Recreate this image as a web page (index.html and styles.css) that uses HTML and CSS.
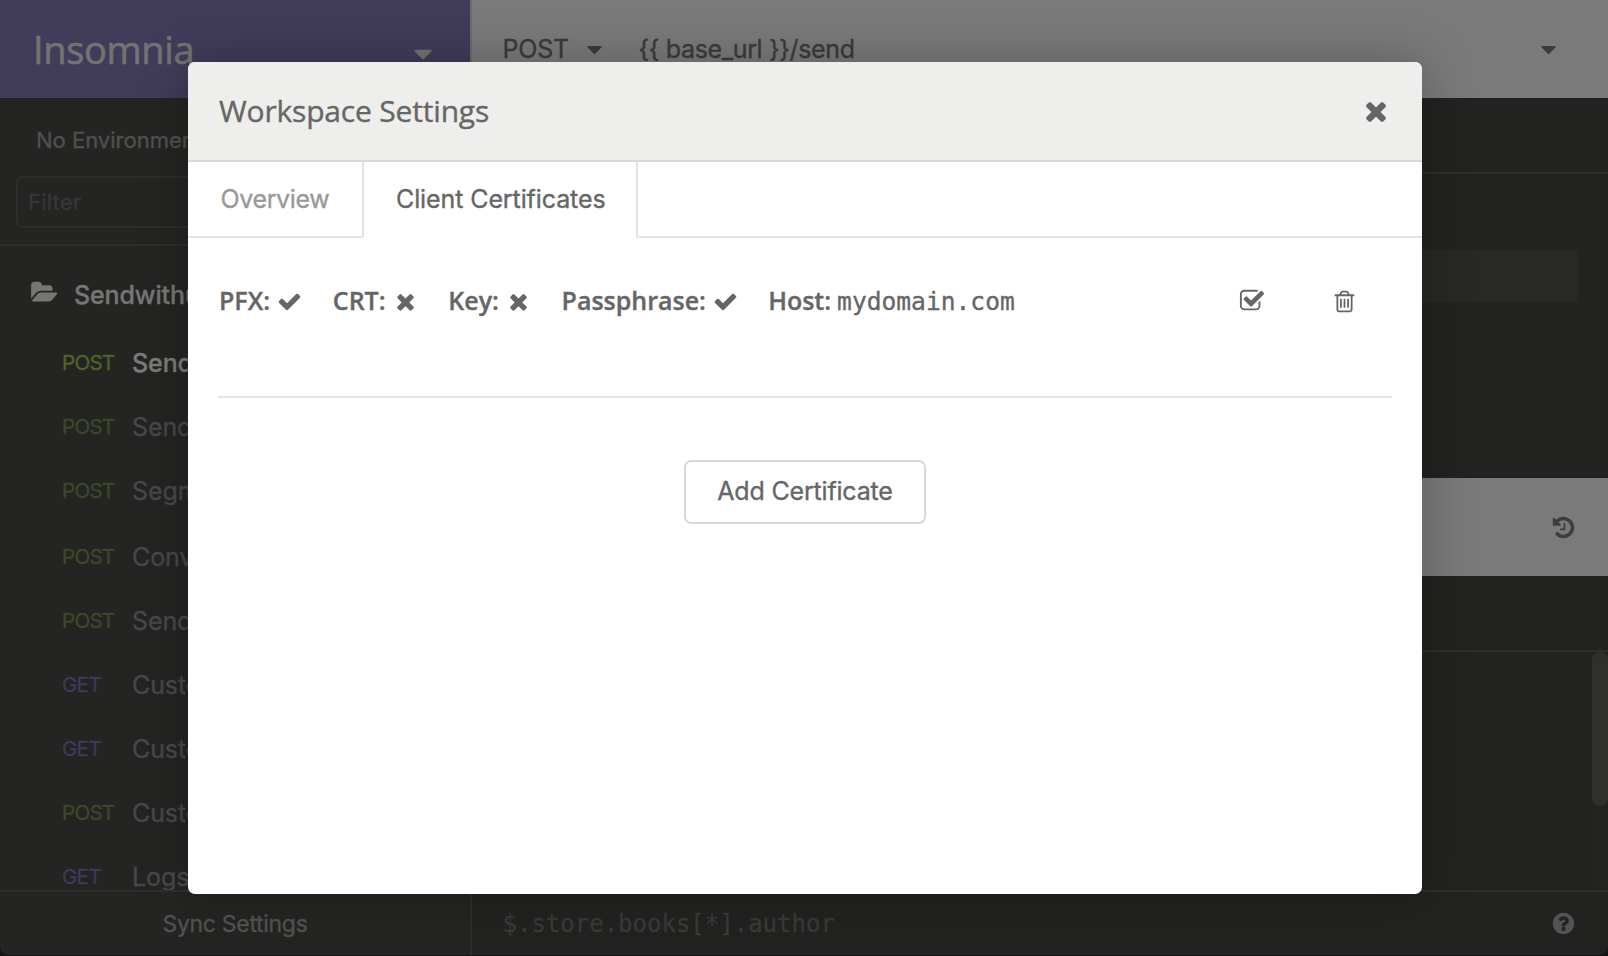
FILE: index.html
```html
<!DOCTYPE html>
<html lang="en">
<head>
<meta charset="utf-8">
<title>Insomnia</title>
<link rel="stylesheet" href="styles.css">
</head>
<body>
<svg class="defs" aria-hidden="true">
  <symbol id="times" viewBox="0 0 1792 1792"><path d="M1490 1322q0 40-28 68l-136 136q-28 28-68 28t-68-28l-294-294-294 294q-28 28-68 28t-68-28l-136-136q-28-28-28-68t28-68l294-294-294-294q-28-28-28-68t28-68l136-136q28-28 68-28t68 28l294 294 294-294q28-28 68-28t68 28l136 136q28 28 28 68t-28 68l-294 294 294 294q28 28 28 68z"/></symbol>
  <symbol id="check" viewBox="0 0 1792 1792"><path d="M1671 566q0 40-28 68l-724 724-136 136q-28 28-68 28t-68-28l-136-136-362-362q-28-28-28-68t28-68l136-136q28-28 68-28t68 28l294 295 656-657q28-28 68-28t68 28l136 136q28 28 28 68z"/></symbol>
  <symbol id="check-square" viewBox="0 0 1792 1792"><path d="M1472 930v318q0 119-84.500 203.500t-203.500 84.500h-832q-119 0-203.500-84.500t-84.500-203.500v-832q0-119 84.500-203.500t203.500-84.500h832q63 0 117 25 15 7 18 23 3 17-9 29l-49 49q-10 10-23 10-3 0-9-2-23-6-45-6h-832q-66 0-113 47t-47 113v832q0 66 47 113t113 47h832q66 0 113-47t47-113v-254q0-13 9-22l64-64q10-10 23-10 6 0 12 3 20 8 20 29zm231-489l-814 814q-24 24-57 24t-57-24l-430-430q-24-24-24-57t24-57l110-110q24-24 57-24t57 24l263 263 647-647q24-24 57-24t57 24l110 110q24 24 24 57t-24 57z"/></symbol>
  <symbol id="trash" viewBox="0 0 1792 1792"><path d="M704 736v576q0 14-9 23t-23 9h-64q-14 0-23-9t-9-23v-576q0-14 9-23t23-9h64q14 0 23 9t9 23zm256 0v576q0 14-9 23t-23 9h-64q-14 0-23-9t-9-23v-576q0-14 9-23t23-9h64q14 0 23 9t9 23zm256 0v576q0 14-9 23t-23 9h-64q-14 0-23-9t-9-23v-576q0-14 9-23t23-9h64q14 0 23 9t9 23zm128 724v-948h-896v948q0 22 7 40.500t14.500 27 10.500 8.500h832q3 0 10.500-8.500t14.500-27 7-40.500zm-672-1076h448l-48-117q-7-9-17-11h-317q-10 2-17 11zm928 32v64q0 14-9 23t-23 9h-96v948q0 83-47 143.500t-113 60.500h-832q-66 0-113-58.500t-47-141.500v-952h-96q-14 0-23-9t-9-23v-64q0-14 9-23t23-9h309l70-167q15-37 54-63t79-26h320q40 0 79 26t54 63l70 167h309q14 0 23 9t9 23z"/></symbol>
  <symbol id="caret" viewBox="0 0 1792 1792"><path d="M1408 704q0 26-19 45l-448 448q-19 19-45 19t-45-19l-448-448q-19-19-19-45t19-45 45-19h896q26 0 45 19t19 45z"/></symbol>
  <symbol id="folder" viewBox="0 0 1920 1792"><path d="M1879 952q0 31-31 66l-336 396q-43 51-120.500 86.500t-143.500 35.500h-1088q-34 0-60.500-13t-26.500-43q0-31 31-66l336-396q43-51 120.500-86.500t143.500-35.500h1088q34 0 60.500 13t26.500 43zm-343-344v160h-832q-94 0-197 47.500t-164 119.500l-337 396-5 6q0-4-.5-12.500t-.5-12.500v-960q0-92 66-158t158-66h320q92 0 158 66t66 158v32h544q92 0 158 66t66 158z"/></symbol>
  <symbol id="history" viewBox="0 0 1792 1792"><path d="M1664 896q0 156-61 298t-164 245-245 164-298 61q-172 0-327-72.500t-264-204.500q-7-10-6.500-22.500t8.500-20.500l137-138q10-9 25-9 16 2 23 12 73 95 179 147t225 52q104 0 198.500-40.500t163.500-109.500 109.500-163.500 40.500-198.500-40.500-198.500-109.500-163.500-163.500-109.500-198.500-40.500q-98 0-188 35.500t-160 101.500l137 138q31 30 14 69-17 40-59 40h-448q-26 0-45-19t-19-45v-448q0-42 40-59 39-17 69 14l130 129q107-101 244.500-156.500t284.500-55.500q156 0 298 61t245 164 164 245 61 298zm-640-288v448q0 14-9 23t-23 9h-320q-14 0-23-9t-9-23v-64q0-14 9-23t23-9h224v-352q0-14 9-23t23-9h64q14 0 23 9t9 23z"/></symbol>
  <symbol id="question" viewBox="0 0 1792 1792"><path d="M1024 1376v-192q0-14-9-23t-23-9h-192q-14 0-23 9t-9 23v192q0 14 9 23t23 9h192q14 0 23-9t9-23zm256-672q0-88-55.500-163t-138.500-116-170-41q-243 0-371 213-15 24 8 42l132 100q7 6 19 6 16 0 25-12 53-68 86-92 34-24 86-24 48 0 85.500 26t37.500 59q0 38-20 61t-68 45q-63 28-115.500 86.500t-52.500 125.500v36q0 14 9 23t23 9h192q14 0 23-9t9-23q0-19 21.500-49.500t54.500-49.500q32-18 49-28.500t46-35 44.500-48 28-60.500 12.500-81zm384 192q0 209-103 385.500t-279.500 279.500-385.500 103-385.500-103-279.500-279.500-103-385.500 103-385.500 279.500-279.500 385.500-103 385.500 103 279.500 279.500 103 385.500z"/></symbol>
</svg>

<div class="app">
  <aside class="sidebar">
    <header class="brand"><h1>Insomnia</h1><svg class="icon brand-caret"><use href="#caret"/></svg></header>
    <div class="environment">No Environment</div>
    <div class="filter"><div class="filter-box">Filter</div></div>
    <nav class="requests">
      <div class="folder"><svg class="folder-icon"><use href="#folder"/></svg><span>Sendwithus</span></div>
      <div class="request active"><b class="post">POST</b><span>Send</span></div>
      <div class="request"><b class="post">POST</b><span>Send</span></div>
      <div class="request spaced"><b class="post">POST</b><span>Segment</span></div>
      <div class="request"><b class="post">POST</b><span>Conv</span></div>
      <div class="request"><b class="post">POST</b><span>Send</span></div>
      <div class="request"><b class="get">GET</b><span>Custo</span></div>
      <div class="request"><b class="get">GET</b><span>Custo</span></div>
      <div class="request"><b class="post">POST</b><span>Custo</span></div>
      <div class="request"><b class="get">GET</b><span>Logs</span></div>
    </nav>
    <footer class="sync">Sync Settings</footer>
  </aside>

  <main class="pane">
    <div class="urlbar">
      <span class="method">POST</span><svg class="icon"><use href="#caret"/></svg>
      <span class="url">{{ base_url }}/send</span>
      <svg class="icon send-caret"><use href="#caret"/></svg>
    </div>
    <div class="pane-tabs"></div>
    <div class="body-area"><div class="field"></div></div>
    <div class="response-bar"><svg class="icon"><use href="#history"/></svg></div>
    <div class="response-tabs"></div>
    <div class="response-body"><div class="track"><div class="thumb"></div></div></div>
    <footer class="query"><span>$.store.books[*].author</span><svg class="icon"><use href="#question"/></svg></footer>
  </main>
</div>

<section class="modal" role="dialog">
  <header class="modal-header"><h2>Workspace Settings</h2><svg class="icon close"><use href="#times"/></svg></header>
  <div class="tabs">
    <div class="tab overview">Overview</div>
    <div class="tab selected">Client Certificates</div>
    <div class="tab-rest"></div>
  </div>
  <div class="modal-body">
    <div class="cert">
      <div class="prop"><strong>PFX:</strong><svg class="icon"><use href="#check"/></svg></div>
      <div class="prop"><strong>CRT:</strong><svg class="icon"><use href="#times"/></svg></div>
      <div class="prop"><strong>Key:</strong><svg class="icon"><use href="#times"/></svg></div>
      <div class="prop"><strong>Passphrase:</strong><svg class="icon"><use href="#check"/></svg></div>
      <div class="prop host"><strong>Host:</strong><code>mydomain.com</code></div>
      <div class="actions"><svg class="icon toggle"><use href="#check-square"/></svg><svg class="icon"><use href="#trash"/></svg></div>
    </div>
    <div class="rule"></div>
    <button class="add">Add Certificate</button>
  </div>
</section>
</body>
</html>
```
FILE: styles.css
```css
* { box-sizing: border-box; }

body {
  margin: 0;
  width: 1608px;
  height: 956px;
  overflow: hidden;
  background: #151414;
  font-family: Inter, "Liberation Sans", sans-serif;
  font-size: 25px;
  white-space: nowrap;
  -webkit-text-stroke: 0.35px currentColor;
}

h1, h2 { margin: 0; font-weight: 400; font-family: "Open Sans", sans-serif; }
.defs { display: none; }
.icon { width: 25px; height: 25px; flex: none; fill: currentColor; }

.app {
  display: grid;
  grid-template-columns: 470px 1138px;
  height: 955px;
  border-radius: 0 0 9px 9px;
  overflow: hidden;
}

/* Sidebar */
.sidebar {
  display: flex;
  flex-direction: column;
  min-height: 0;
  overflow: hidden;
  background: #242422;
  color: #484848;
}
.brand {
  display: flex;
  align-items: center;
  justify-content: space-between;
  height: 98px;
  padding: 0 32px 0 33px;
  background: #403c5a;
  color: #747371;
}
.brand h1 { font-size: 38px; letter-spacing: -0.35px; line-height: 98px; -webkit-text-stroke-width: 0.6px; }
.brand-caret { width: 30px; height: 30px; margin-top: 9px; }
.environment {
  height: 78px;
  padding: 5px 0 0 36px;
  line-height: 74px;
  font-size: 22px;
  color: #50504f;
}
.filter { height: 70px; padding: 0 16px; border-bottom: 2px solid #2d2d2b; }
.filter-box {
  height: 52px;
  padding-left: 10px;
  border: 2px solid #2d2d2c;
  border-radius: 7px;
  font-size: 22px;
  line-height: 48px;
  color: #373737;
  letter-spacing: 0.2px;
}
.requests { flex: 1; min-height: 0; padding-top: 17px; }
.folder {
  display: flex;
  align-items: center;
  height: 64px;
  margin-bottom: 4px;
  padding-left: 31px;
  color: #767675;
  font-weight: 500;
  letter-spacing: -0.13px;
}
.folder-icon { width: 27px; height: 25px; margin: -6px 16px 0 0; fill: currentColor; }
.request { display: flex; align-items: center; height: 64px; padding-left: 62px; }
.request b { width: 70px; padding-bottom: 1px; font-weight: 400; font-size: 20.6px; letter-spacing: -0.75px; }
.request span { letter-spacing: -0.1px; }
.post { color: #3c4829; }
.get { color: #3d3a58; }
.active span { color: #7b7b7a; font-weight: 500; }
.active .post { color: #4d6429; }
.spaced { margin-bottom: 2px; }
.sync {
  height: 65px;
  border-top: 2px solid #2d2d2c;
  text-align: center;
  font-size: 23px;
  letter-spacing: -0.3px;
  line-height: 65px;
  color: #525251;
}

/* Request and response panes */
.pane {
  display: flex;
  flex-direction: column;
  min-height: 0;
  background: #222220;
  border-left: 2px solid #2d2d2c;
}
.urlbar {
  display: flex;
  align-items: center;
  height: 98px;
  margin-left: -2px;
  padding: 0 47px 0 30.500px;
  border-left: 2px solid #6c6c6b;
  background: #7a7a7a;
  color: #3b3b3a;
}
.method { width: 79px; letter-spacing: -0.2px; }
.url { margin-left: 32px; letter-spacing: -0.36px; }
.send-caret { margin-left: auto; }
.pane-tabs { height: 76px; border-bottom: 2px solid #2d2d2c; }
.body-area { height: 304px; padding: 76px 30px 0; }
.field { height: 52px; background: #282826; }
.response-bar {
  display: flex;
  align-items: center;
  justify-content: flex-end;
  height: 98px;
  padding-right: 32px;
  background: #7a7a7a;
  color: #3e3e3d;
}
.response-tabs { height: 76px; border-bottom: 2px solid #2d2d2c; }
.response-body { flex: 1; display: flex; justify-content: flex-end; }
.track { width: 16px; background: #232321; }
.thumb { height: 154px; border-radius: 8px; background: #2f2f2e; }
.query {
  display: flex;
  align-items: center;
  justify-content: space-between;
  height: 65px;
  padding: 0 32px 0 30.500px;
  border-top: 2px solid #2d2d2c;
  font-family: "DejaVu Sans Mono", monospace;
  font-size: 24px;
  color: #393938;
}
.query .icon { color: #535353; }

/* Workspace settings dialog */
.modal {
  position: absolute;
  left: 188px;
  top: 62px;
  width: 1234px;
  height: 832px;
  overflow: hidden;
  border-radius: 7px;
  background: #fff;
  color: #666;
  box-shadow: 0 0 50px rgba(0, 0, 0, 0.25);
}
.modal-header {
  display: flex;
  align-items: center;
  justify-content: space-between;
  height: 100px;
  padding: 0 31px;
  border-bottom: 2px solid #d9d9d8;
  background: #eeeeec;
}
.modal-header h2 { font-size: 30px; letter-spacing: -0.18px; line-height: 98px; }
.close { width: 30px; height: 30px; }
.tabs { display: flex; height: 76px; line-height: 74px; }
.tab { border-right: 2px solid #e2e2e2; }
.overview {
  width: 176px;
  padding-left: 32.500px;
  border-bottom: 2px solid #e2e2e2;
  border-bottom-right-radius: 3px;
  color: #999;
  letter-spacing: -0.36px;
}
.selected { width: 274px; padding-left: 32px; letter-spacing: -0.1px; }
.tab-rest { flex: 1; border-bottom: 2px solid #e2e2e2; border-bottom-left-radius: 3px; }
.modal-body { padding: 37px 30px 0; }
.cert { display: flex; align-items: center; gap: 30.500px; height: 52px; padding-left: 1px; }
.prop { display: flex; align-items: center; gap: 7.200px; }
.prop strong { font: 600 25px/50px "Open Sans", sans-serif; padding-bottom: 2px; }
.prop .icon { margin-top: 1px; }
.prop.host { gap: 6px; margin-left: -0.5px; }
.prop code { font: 24.600px/50px "DejaVu Sans Mono", monospace; padding-top: 1px; }
.actions { display: flex; align-items: center; gap: 67px; margin-left: auto; padding-right: 35px; }
.toggle { width: 26px; height: 26px; }
.rule { height: 2px; margin-top: 69px; background: #e4e4e4; }
.add {
  display: block;
  width: 242px;
  height: 64px;
  margin: 62px auto 0;
  padding: 0 0 2px;
  border: 2px solid #d9d9d9;
  border-radius: 7px;
  background: #fff;
  color: #666;
  font: inherit;
  letter-spacing: -0.18px;
}
```
